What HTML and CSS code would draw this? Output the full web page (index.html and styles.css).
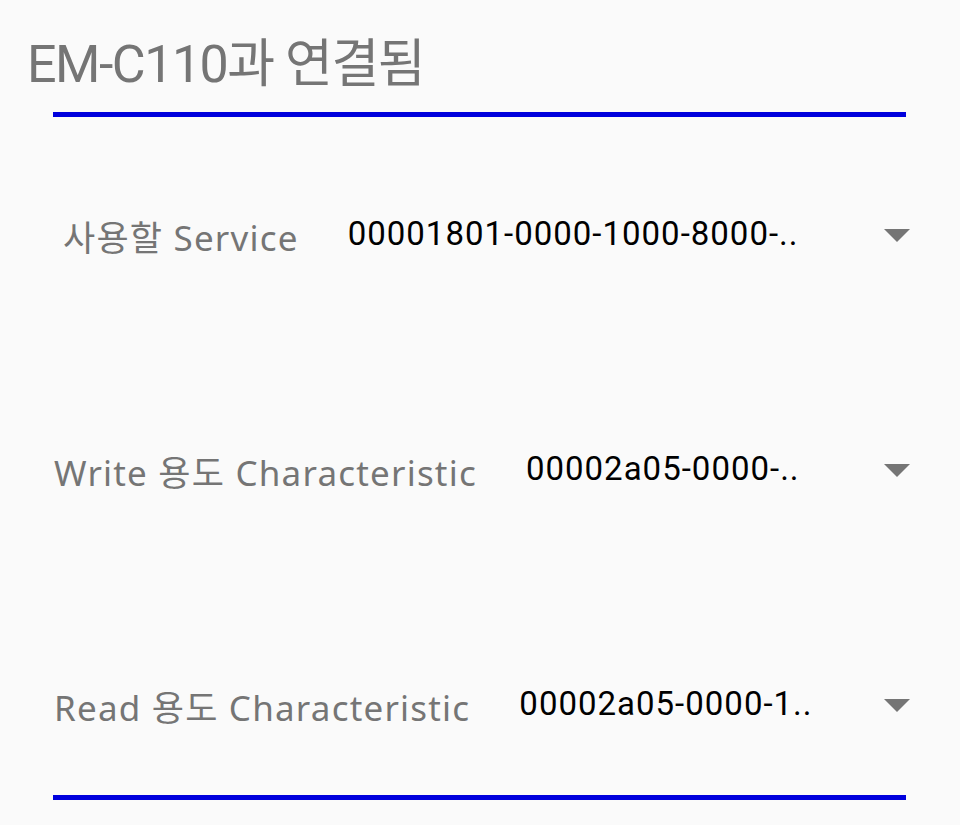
FILE: index.html
```html
<!DOCTYPE html>
<html lang="ko">
<head>
<meta charset="utf-8">
<title>EM-C110과 연결됨</title>
<link rel="stylesheet" href="styles.css">
</head>
<body>
<div class="screen">
  <h1 class="title">EM-C110과 연결됨</h1>
  <div class="rule rule-top"></div>
  <div class="rows">
    <div class="row row-first">
      <span class="label">사용할 Service</span>
      <div class="spinner">
        <span class="value">00001801-0000-1000-8000-..</span>
        <svg class="arrow" width="26" height="13" viewBox="0 0 26 13"><polygon points="0,0 26,0 13,13" fill="#757575"/></svg>
      </div>
    </div>
    <div class="row">
      <span class="label">Write 용도 Characteristic</span>
      <div class="spinner">
        <span class="value">00002a05-0000-..</span>
        <svg class="arrow" width="26" height="13" viewBox="0 0 26 13"><polygon points="0,0 26,0 13,13" fill="#757575"/></svg>
      </div>
    </div>
    <div class="row">
      <span class="label">Read 용도 Characteristic</span>
      <div class="spinner">
        <span class="value">00002a05-0000-1..</span>
        <svg class="arrow" width="26" height="13" viewBox="0 0 26 13"><polygon points="0,0 26,0 13,13" fill="#757575"/></svg>
      </div>
    </div>
  </div>
  <div class="rule rule-bottom"></div>
</div>
</body>
</html>
```
FILE: styles.css
```css
html, body {
  margin: 0;
  padding: 0;
  background: #fafafa;
}
.screen {
  width: 960px;
  height: 825px;
  font-family: Roboto, "Noto Sans CJK KR", sans-serif;
  overflow: hidden;
}
.title {
  margin: 0;
  padding: 35px 0 0 27px;
  height: 82px;
  box-sizing: border-box;
  font-size: 52px;
  font-weight: 400;
  line-height: 60px;
  letter-spacing: -1.5px;
  color: #757575;
}
.rule {
  height: 5px;
  background: #0000dd;
  margin: 0 54px 0 53px;
}
.rule-top {
  margin-top: 30px;
}
.rows {
  display: flex;
  flex-direction: column;
  gap: 175px;
  padding: 88px 0 60px 0;
}
.row {
  display: flex;
  align-items: center;
  height: 60px;
  padding-left: 54px;
  padding-right: 50px;
}
.row-first {
  padding-left: 63px;
}
.label {
  font-family: "Noto Sans", "Noto Sans CJK KR", sans-serif;
  font-size: 35px;
  letter-spacing: 1.2px;
  color: #757575;
  white-space: nowrap;
}
.spinner {
  flex: 1;
  display: flex;
  align-items: center;
  margin-left: 49px;
}
.value {
  flex: 1;
  font-size: 33px;
  letter-spacing: 1px;
  color: #000;
  white-space: nowrap;
  position: relative;
  top: -2px;
}
.arrow {
  display: block;
}
```
